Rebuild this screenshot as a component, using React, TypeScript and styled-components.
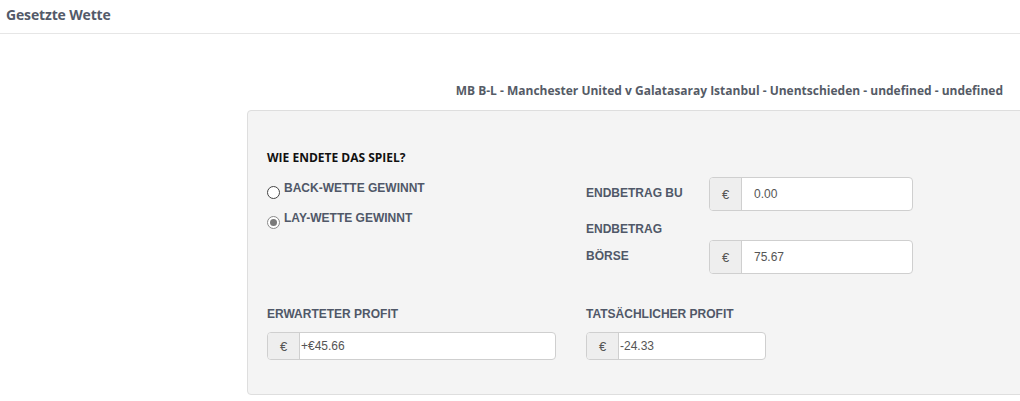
import React from "react";
import styled, { createGlobalStyle } from "styled-components";

const GlobalStyle = createGlobalStyle`
  html, body { margin: 0; padding: 0; background: #ffffff; }
  body { overflow: hidden; }
  * { box-sizing: border-box; }
`;

const Page = styled.div`
  width: 1020px;
  height: 401px;
  overflow: hidden;
  background: #fff;
`;

const Header = styled.div`
  height: 34px;
  display: flex;
  align-items: center;
  padding: 0 6px 4px;
  border-bottom: 1px solid #e6e6e6;
`;

const Title = styled.h1`
  margin: 0;
  font-family: "Open Sans", sans-serif;
  font-size: 14px;
  font-weight: 700;
  letter-spacing: -0.15px;
  color: #535a69;
`;

const Subtitle = styled.div`
  margin-top: 49px;
  padding-right: 17px;
  text-align: right;
  font-family: "Open Sans", sans-serif;
  font-size: 12px;
  font-weight: 700;
  line-height: 16px;
  color: #555b66;
`;

const Panel = styled.div`
  margin: 11px -4px 0 247px;
  height: 285px;
  padding: 39px 20px 0 19px;
  background: #f4f4f4;
  border: 1px solid #dedede;
  border-radius: 4px;
`;

const TopGrid = styled.div`
  display: grid;
  grid-template-columns: 319px 1fr;
  align-items: start;
`;

const LeftCol = styled.div`
  display: flex;
  flex-direction: column;
`;

const Heading = styled.div`
  font-family: "Open Sans", sans-serif;
  font-size: 12px;
  font-weight: 700;
  line-height: 16px;
  color: #111;
  margin-bottom: 14px;
`;

const RadioRow = styled.label`
  display: flex;
  align-items: flex-start;
  gap: 4px;
  height: 16px;
  margin-bottom: 14px;
`;

const RadioCircle = styled.span<{ $checked?: boolean }>`
  flex: none;
  position: relative;
  width: 13px;
  height: 13px;
  margin-top: 6px;
  border-radius: 50%;
  background: #fff;
  border: 1px solid ${(p) => (p.$checked ? "#8a8a8a" : "#444")};
  &::after {
    content: "";
    display: ${(p) => (p.$checked ? "block" : "none")};
    position: absolute;
    left: 2px;
    top: 2px;
    width: 7px;
    height: 7px;
    border-radius: 50%;
    background: #7a7a7a;
  }
`;

const FieldLabel = styled.div<{ $tall?: boolean }>`
  font-family: "Liberation Sans", Arial, sans-serif;
  font-size: 12px;
  font-weight: 700;
  color: #505868;
  line-height: ${(p) => (p.$tall ? "27px" : "16px")};
`;

const RightCol = styled.div`
  margin-top: 27px;
  display: flex;
  flex-direction: column;
  gap: 5px;
`;

const FieldRow = styled.div`
  display: grid;
  grid-template-columns: 123px 204px;
  align-items: end;
  ${FieldLabel} {
    padding-bottom: 4px;
  }
`;

const InputGroup = styled.div<{ $w: number; $h: number }>`
  display: flex;
  width: ${(p) => p.$w}px;
  height: ${(p) => p.$h}px;
  border: 1px solid #cfcfcf;
  border-radius: 4px;
  overflow: hidden;
  background: #fff;
`;

const Addon = styled.span`
  flex: none;
  width: 32px;
  display: flex;
  align-items: center;
  justify-content: center;
  background: #eeeeee;
  border-right: 1px solid #cfcfcf;
  font-family: "Liberation Sans", Arial, sans-serif;
  font-size: 13px;
  color: #555;
`;

const Value = styled.span<{ $pad: number }>`
  flex: 1;
  display: flex;
  align-items: center;
  padding-left: ${(p) => p.$pad}px;
  font-family: "Liberation Sans", Arial, sans-serif;
  font-size: 12px;
  color: #555;
`;

const BottomGrid = styled.div`
  margin-top: 32px;
  display: grid;
  grid-template-columns: 319px 1fr;
`;

const Field = styled.div`
  display: flex;
  flex-direction: column;
  gap: 10px;
`;

const Amount = ({ value, w, h, pad }: { value: string; w: number; h: number; pad: number }) => (
  <InputGroup $w={w} $h={h}>
    <Addon>€</Addon>
    <Value $pad={pad}>{value}</Value>
  </InputGroup>
);

export default function App() {
  return (
    <Page>
      <GlobalStyle />
      <Header>
        <Title>Gesetzte Wette</Title>
      </Header>
      <Subtitle>
        MB B-L - Manchester United v Galatasaray Istanbul - Unentschieden - undefined - undefined
      </Subtitle>
      <Panel>
        <TopGrid>
          <LeftCol>
            <Heading>WIE ENDETE DAS SPIEL?</Heading>
            <RadioRow>
              <RadioCircle />
              <FieldLabel>BACK-WETTE GEWINNT</FieldLabel>
            </RadioRow>
            <RadioRow>
              <RadioCircle $checked />
              <FieldLabel>LAY-WETTE GEWINNT</FieldLabel>
            </RadioRow>
          </LeftCol>
          <RightCol>
            <FieldRow>
              <FieldLabel $tall>ENDBETRAG BU</FieldLabel>
              <Amount value="0.00" w={204} h={34} pad={12} />
            </FieldRow>
            <FieldRow>
              <FieldLabel $tall>
                ENDBETRAG
                <br />
                BÖRSE
              </FieldLabel>
              <Amount value="75.67" w={204} h={34} pad={12} />
            </FieldRow>
          </RightCol>
        </TopGrid>
        <BottomGrid>
          <Field>
            <FieldLabel>ERWARTETER PROFIT</FieldLabel>
            <Amount value="+€45.66" w={289} h={28} pad={1} />
          </Field>
          <Field>
            <FieldLabel>TATSÄCHLICHER PROFIT</FieldLabel>
            <Amount value="-24.33" w={180} h={28} pad={1} />
          </Field>
        </BottomGrid>
      </Panel>
    </Page>
  );
}
